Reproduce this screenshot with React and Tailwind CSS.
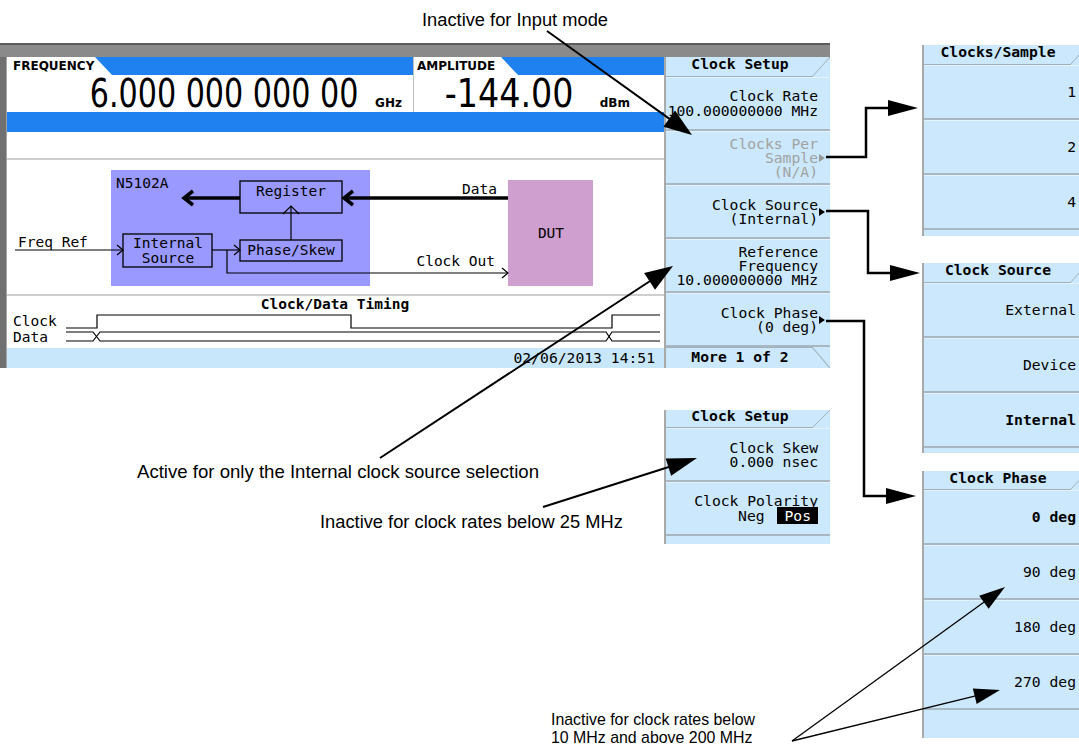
import React from 'react';

// Agilent MXG "Clock Setup" softkey figure with callouts

const KEY_BG = 'bg-[#cbe8fc]';

function Tri({ gray }) {
    return (
        <span
            className={`absolute right-[5px] top-1/2 -mt-[4px] w-0 h-0 border-y-[4px] border-y-transparent border-l-[6px] ${gray ? 'border-l-[#9a9a9a]' : 'border-l-black'}`}
        />
    );
}

function Key({ children, arrow, gray, h = 'h-[54px]' }) {
    return (
        <div
            className={`relative ${h} ${KEY_BG} border-t border-t-[#e4f2fd] border-b-2 border-b-[#a9b7c2] flex flex-col justify-center items-end pr-[12px] text-[14.7px] leading-[14px] whitespace-nowrap ${gray ? 'text-[#a2a2a2]' : 'text-black'}`}
        >
            {children}
            {arrow && <Tri gray={gray} />}
        </div>
    );
}

function PanelHeader({ title, h = 'h-[20px]' }) {
    return (
        <div className={`relative ${h} ${KEY_BG} flex items-center pb-[5px]`}>
            <span className="flex-1 pr-[16px] text-center font-bold text-[14.7px] leading-none">{title}</span>
            <div className="absolute left-0 right-[18px] bottom-0 h-px bg-[#9fb0bc]" />
            <svg className="absolute right-0 top-0 h-full w-[18px]" viewBox="0 0 18 20" preserveAspectRatio="none">
                <line x1="0" y1="20" x2="18" y2="0" stroke="#9fb0bc" strokeWidth="1" />
            </svg>
        </div>
    );
}

function Panel({ title, keys, tail, h, headH, className }) {
    return (
        <div className={`absolute w-[166px] border-l-2 border-[#a9a9a9] font-['DejaVu_Sans_Mono',monospace] ${className}`}>
            <PanelHeader title={title} h={headH} />
            {keys.map((k, i) => (
                <Key key={i} h={h}>
                    <span className={k.bold ? 'font-bold' : ''}>{k.label}</span>
                </Key>
            ))}
            <div className={`${tail} ${KEY_BG}`} />
        </div>
    );
}

function Diagram() {
    const t = { fontFamily: "'DejaVu Sans Mono', monospace", fontSize: 14.5 };
    return (
        <svg width="657" height="134" viewBox="7 160 657 134" className="block">
            <rect x="111" y="170" width="259" height="116" fill="#9999ff" />
            <rect x="508" y="180" width="85" height="106" fill="#cf9fcf" />
            <text x="116" y="188" {...t}>N5102A</text>
            <text x="551" y="238" textAnchor="middle" {...t}>DUT</text>

            <rect x="240" y="181" width="102" height="32" fill="none" stroke="black" strokeWidth="1.3" />
            <text x="291" y="196" textAnchor="middle" {...t}>Register</text>

            <line x1="240" y1="198" x2="185" y2="198" stroke="black" strokeWidth="3.5" />
            <polyline points="193,191 184,198 193,205" fill="none" stroke="black" strokeWidth="3.5" />
            <line x1="508" y1="198" x2="346" y2="198" stroke="black" strokeWidth="3.5" />
            <polyline points="353,191 344,198 353,205" fill="none" stroke="black" strokeWidth="3.5" />
            <text x="497" y="194" textAnchor="end" {...t}>Data</text>

            <rect x="123" y="234" width="89" height="33" fill="none" stroke="black" strokeWidth="1.3" />
            <text x="168" y="248" textAnchor="middle" {...t}>Internal</text>
            <text x="168" y="263" textAnchor="middle" {...t}>Source</text>

            <text x="18" y="247" {...t}>Freq Ref</text>
            <line x1="15" y1="250" x2="123" y2="250" stroke="black" strokeWidth="1.2" />
            <polyline points="117,245 123,250 117,255" fill="none" stroke="black" strokeWidth="1.2" />

            <rect x="240" y="240" width="102" height="21" fill="none" stroke="black" strokeWidth="1.3" />
            <text x="291" y="255" textAnchor="middle" {...t}>Phase/Skew</text>
            <line x1="212" y1="250" x2="240" y2="250" stroke="black" strokeWidth="1.2" />
            <polyline points="234,245 240,250 234,255" fill="none" stroke="black" strokeWidth="1.2" />

            <polyline points="227,250 227,273 508,273" fill="none" stroke="black" strokeWidth="1.2" />
            <polyline points="502,268 508,273 502,278" fill="none" stroke="black" strokeWidth="1.2" />
            <text x="495" y="266" textAnchor="end" {...t}>Clock Out</text>

            <line x1="291" y1="240" x2="291" y2="206" stroke="black" strokeWidth="1.2" />
            <polyline points="283,214 291,206 299,214" fill="none" stroke="black" strokeWidth="1.2" />
        </svg>
    );
}

function Timing() {
    const t = { fontFamily: "'DejaVu Sans Mono', monospace", fontSize: 14.5 };
    return (
        <svg width="657" height="52" viewBox="7 296 657 52" className="block">
            <text x="335" y="309" textAnchor="middle" fontWeight="bold" {...t}>Clock/Data Timing</text>
            <text x="13" y="326" {...t}>Clock</text>
            <text x="13" y="342" {...t}>Data</text>
            <polyline points="66,328 97,328 97,315 351,315 351,328 612,328 612,315 660,315" fill="none" stroke="black" strokeWidth="1.2" />
            <polyline points="66,332 93,332 100,341 606,341 612,332 660,332" fill="none" stroke="black" strokeWidth="1.2" />
            <polyline points="66,341 93,341 100,332 606,332 612,341 660,341" fill="none" stroke="black" strokeWidth="1.2" />
        </svg>
    );
}

function Screen() {
    return (
        <div className="w-[830px]">
            <div className="h-[14px] bg-[#8a8a8a] border-t-2 border-[#5c5c5c]" />
            <div className="flex h-[311px]">
                <div className="w-[7px] bg-[#707070] border-r border-[#a5a5a5]" />

                {/* display */}
                <div className="w-[657px] flex flex-col bg-white">
                    <div className="flex h-[18px]">
                        <div className="flex w-[406px] bg-[#1f80f0]">
                            <div className="w-[88px] bg-white pl-[6px] font-['DejaVu_Sans',sans-serif] font-bold text-[12px] leading-[19px]">FREQUENCY</div>
                            <svg width="17" height="18" className="block"><polygon points="0,0 17,18 0,18" fill="white" /></svg>
                        </div>
                        <div className="w-px bg-[#bdbdbd]" />
                        <div className="flex flex-1 bg-[#1f80f0]">
                            <div className="w-[87px] bg-white pl-[3px] font-['DejaVu_Sans',sans-serif] font-bold text-[12px] leading-[19px]">AMPLITUDE</div>
                            <svg width="17" height="18" className="block"><polygon points="0,0 17,18 0,18" fill="white" /></svg>
                        </div>
                    </div>
                    <div className="flex h-[37px]">
                        <div className="w-[406px] flex justify-end items-baseline pr-[11px]">
                            <span className="inline-block origin-right scale-x-[0.86] font-['Liberation_Sans_Narrow','DejaVu_Sans_Condensed',sans-serif] text-[39px] leading-[37px] whitespace-nowrap">6.000 000 000 00</span>
                            <span className="ml-[17px] font-['DejaVu_Sans',sans-serif] font-bold text-[12px]">GHz</span>
                        </div>
                        <div className="w-px bg-[#bdbdbd]" />
                        <div className="flex-1 flex justify-end items-baseline pr-[34px]">
                            <span className="inline-block origin-right scale-x-[0.95] font-['Liberation_Sans_Narrow','DejaVu_Sans_Condensed',sans-serif] text-[39px] leading-[37px] whitespace-nowrap">-144.00</span>
                            <span className="ml-[26px] font-['DejaVu_Sans',sans-serif] font-bold text-[12px]">dBm</span>
                        </div>
                    </div>
                    <div className="h-[20px] bg-[#1f80f0]" />
                    <div className="h-[26px]" />
                    <div className="h-[2px] bg-[#cfcfcf]" />
                    <Diagram />
                    <div className="h-[2px] bg-[#cfcfcf]" />
                    <Timing />
                    <div className="h-[20px] bg-[#c9e7fb] flex items-center justify-end pr-[9px] font-['DejaVu_Sans_Mono',monospace] text-[14.7px]">
                        02/06/2013 14:51
                    </div>
                </div>

                {/* softkeys */}
                <div className="w-[166px] flex flex-col border-l-2 border-[#a9a9a9] font-['DejaVu_Sans_Mono',monospace]">
                    <PanelHeader title="Clock Setup" />
                    <Key>
                        <span>Clock Rate</span>
                        <span className="mt-px">100.000000000 MHz</span>
                    </Key>
                    <Key gray arrow>
                        <span>Clocks Per</span>
                        <span>Sample</span>
                        <span>(N/A)</span>
                    </Key>
                    <Key arrow>
                        <span>Clock Source</span>
                        <span>(Internal)</span>
                    </Key>
                    <Key>
                        <span>Reference</span>
                        <span>Frequency</span>
                        <span>10.000000000 MHz</span>
                    </Key>
                    <Key arrow>
                        <span>Clock Phase</span>
                        <span>(0 deg)</span>
                    </Key>
                    <div className={`relative flex-1 ${KEY_BG} flex items-center`}>
                        <span className="flex-1 pr-[16px] text-center font-bold text-[14.7px] leading-none">More 1 of 2</span>
                        <div className="absolute left-0 right-[18px] top-0 h-px bg-[#9fb0bc]" />
                        <svg className="absolute right-0 top-0 h-full w-[18px]" viewBox="0 0 18 20" preserveAspectRatio="none">
                            <line x1="0" y1="0" x2="18" y2="20" stroke="#9fb0bc" strokeWidth="1" />
                        </svg>
                    </div>
                </div>
            </div>
        </div>
    );
}

function head(x1, y1, x2, y2, len, hw) {
    const dx = x2 - x1;
    const dy = y2 - y1;
    const d = Math.hypot(dx, dy);
    const ux = dx / d;
    const uy = dy / d;
    const bx = x2 - ux * len;
    const by = y2 - uy * len;
    return {
        pts: `${x2},${y2} ${bx - uy * hw},${by + ux * hw} ${bx + uy * hw},${by - ux * hw}`,
        bx: bx + ux * 2,
        by: by + uy * 2,
    };
}

function Arrow({ x1, y1, x2, y2, len = 28, hw = 9, w = 2 }) {
    const h = head(x1, y1, x2, y2, len, hw);
    return (
        <g>
            <line x1={x1} y1={y1} x2={h.bx} y2={h.by} stroke="black" strokeWidth={w} />
            <polygon points={h.pts} fill="black" />
        </g>
    );
}

function Elbow({ pts, tip, y }) {
    return (
        <g>
            <polyline points={pts} fill="none" stroke="black" strokeWidth="2.5" />
            <polygon points={`${tip - 30},${y - 8} ${tip},${y} ${tip - 30},${y + 8}`} fill="black" />
        </g>
    );
}

function Callouts() {
    return (
        <svg className="absolute left-0 top-0 pointer-events-none" width="1079" height="746">
            <Arrow x1={547} y1={31} x2={692} y2={135} len={28} hw={10} />
            <Arrow x1={380} y1={458} x2={673} y2={266} len={28} hw={10} />
            <Arrow x1={543} y1={507} x2={697} y2={458} len={30} hw={9} />
            <Elbow pts="826,157 866,157 866,108 890,108" tip={918} y={108} />
            <Elbow pts="826,211 868,211 868,273 892,273" tip={920} y={273} />
            <Elbow pts="826,321 864,321 864,496 888,496" tip={916} y={496} />
            <Arrow x1={792} y1={741} x2={1005} y2={587} len={26} hw={8} w={1.3} />
            <Arrow x1={792} y1={741} x2={1000} y2={690} len={26} hw={8} w={1.3} />
        </svg>
    );
}

export default function App() {
    return (
        <div className="relative w-[1079px] h-[746px] overflow-hidden bg-white pt-[43px] text-black">
            <Screen />

            <Panel
                className="left-[922px] top-[45px]"
                title="Clocks/Sample"
                h="h-[55px]"
                keys={[{ label: '1' }, { label: '2' }, { label: '4' }]}
                tail="h-[6px]"
            />
            <Panel
                className="left-[922px] top-[263px]"
                title="Clock Source"
                h="h-[55px]"
                keys={[{ label: 'External' }, { label: 'Device' }, { label: 'Internal', bold: true }]}
                tail="h-[5px]"
            />
            <Panel
                className="left-[922px] top-[471px]"
                title="Clock Phase"
                headH="h-[19px]"
                h="h-[55px]"
                keys={[{ label: '0 deg', bold: true }, { label: '90 deg' }, { label: '180 deg' }, { label: '270 deg' }]}
                tail="h-[28px]"
            />

            <div className="absolute left-[664px] top-[410px] w-[166px] border-l-2 border-[#a9a9a9] font-['DejaVu_Sans_Mono',monospace]">
                <PanelHeader title="Clock Setup" h="h-[18px]" />
                <Key>
                    <span>Clock Skew</span>
                    <span>0.000 nsec</span>
                </Key>
                <Key>
                    <span>Clock Polarity</span>
                    <span className="mt-px">
                        Neg <span className="ml-[4px] px-[7px] bg-black text-white">Pos</span>
                    </span>
                </Key>
                <div className={`h-[8px] ${KEY_BG}`} />
            </div>

            <div className="absolute left-[422px] top-[9px] font-['Liberation_Sans',Arial,sans-serif] text-[18.3px] leading-[22px] whitespace-nowrap">
                Inactive for Input mode
            </div>
            <div className="absolute left-[137px] top-[461px] font-['Liberation_Sans',Arial,sans-serif] text-[18.6px] leading-[22px] whitespace-nowrap">
                Active for only the Internal clock source selection
            </div>
            <div className="absolute left-[320px] top-[511px] font-['Liberation_Sans',Arial,sans-serif] text-[18.3px] leading-[22px] whitespace-nowrap">
                Inactive for clock rates below 25 MHz
            </div>
            <div className="absolute left-[551px] top-[711px] font-['Liberation_Sans',Arial,sans-serif] text-[15.9px] leading-[18px] whitespace-nowrap">
                Inactive for clock rates below
                <br />
                10 MHz and above 200 MHz
            </div>

            <Callouts />
        </div>
    );
}
